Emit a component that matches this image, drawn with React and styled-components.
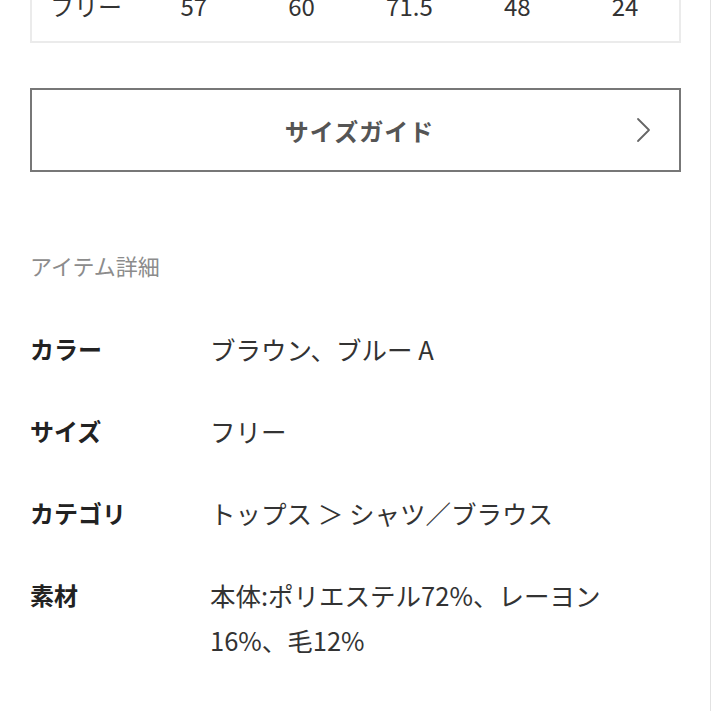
import styled, { createGlobalStyle } from "styled-components";

const GlobalStyle = createGlobalStyle`
  html, body {
    margin: 0;
    padding: 0;
    background: #ffffff;
  }
  body {
    font-family: "Noto Sans CJK JP", "Noto Sans", sans-serif;
    color: #222;
    overflow: hidden;
  }
`;

const Page = styled.div`
  width: 711px;
  min-height: 760px;
  box-sizing: border-box;
  margin-top: -14px;
  padding: 0 29px 0 30px;
  border-right: 1px solid #e2e2e2;
  display: flex;
  flex-direction: column;
`;

const SizeTable = styled.div`
  border: 2px solid #ebebeb;
  padding-bottom: 17px;
`;

const SizeRow = styled.div`
  display: grid;
  grid-template-columns: repeat(6, 1fr);
  height: 36px;
  line-height: 36px;
  font-size: 24px;
  color: #333;
  text-align: center;
`;

const GuideButton = styled.button`
  margin-top: 45px;
  height: 84px;
  border: 2px solid #777;
  background: #fff;
  position: relative;
  display: flex;
  align-items: center;
  justify-content: center;
  font-family: inherit;
  font-size: 24px;
  font-weight: 700;
  letter-spacing: 1px;
  color: #555;
  padding: 0 0 0 8px;
  cursor: pointer;
`;

const Chevron = styled.svg`
  position: absolute;
  right: 27px;
  top: 50%;
  transform: translateY(-50%);
`;

const SectionTitle = styled.div`
  margin-top: 78px;
  font-size: 22px;
  line-height: 30px;
  color: #8c8c8c;
`;

const DetailList = styled.dl`
  margin: 46px 0 0;
  display: flex;
  flex-direction: column;
  gap: 37px;
`;

const DetailRow = styled.div`
  display: flex;
  line-height: 45px;
`;

const Label = styled.dt`
  width: 180px;
  flex-shrink: 0;
  font-size: 24px;
  font-weight: 700;
  color: #222;
`;

const Value = styled.dd`
  margin: 0;
  font-size: 25.5px;
  color: #333;
`;

const sizes = ["フリー", "57", "60", "71.5", "48", "24"];

const details = [
  { label: "カラー", value: ["ブラウン、ブルー A"] },
  { label: "サイズ", value: ["フリー"] },
  { label: "カテゴリ", value: ["トップス ＞ シャツ／ブラウス"] },
  { label: "素材", value: ["本体:ポリエステル72%、レーヨン", "16%、毛12%"] },
];

export default function App() {
  return (
    <>
      <GlobalStyle />
      <Page>
        <SizeTable>
          <SizeRow>
            {sizes.map((s, i) => (
              <span key={i}>{s}</span>
            ))}
          </SizeRow>
        </SizeTable>

        <GuideButton type="button">
          サイズガイド
          <Chevron width="16" height="26" viewBox="0 0 16 26" fill="none">
            <polyline
              points="2,2 13,13 2,24"
              stroke="#666"
              strokeWidth="1.8"
              strokeLinecap="round"
              strokeLinejoin="round"
            />
          </Chevron>
        </GuideButton>

        <SectionTitle>アイテム詳細</SectionTitle>

        <DetailList>
          {details.map((d) => (
            <DetailRow key={d.label}>
              <Label>{d.label}</Label>
              <Value>
                {d.value.map((line, i) => (
                  <div key={i}>{line}</div>
                ))}
              </Value>
            </DetailRow>
          ))}
        </DetailList>
      </Page>
    </>
  );
}
